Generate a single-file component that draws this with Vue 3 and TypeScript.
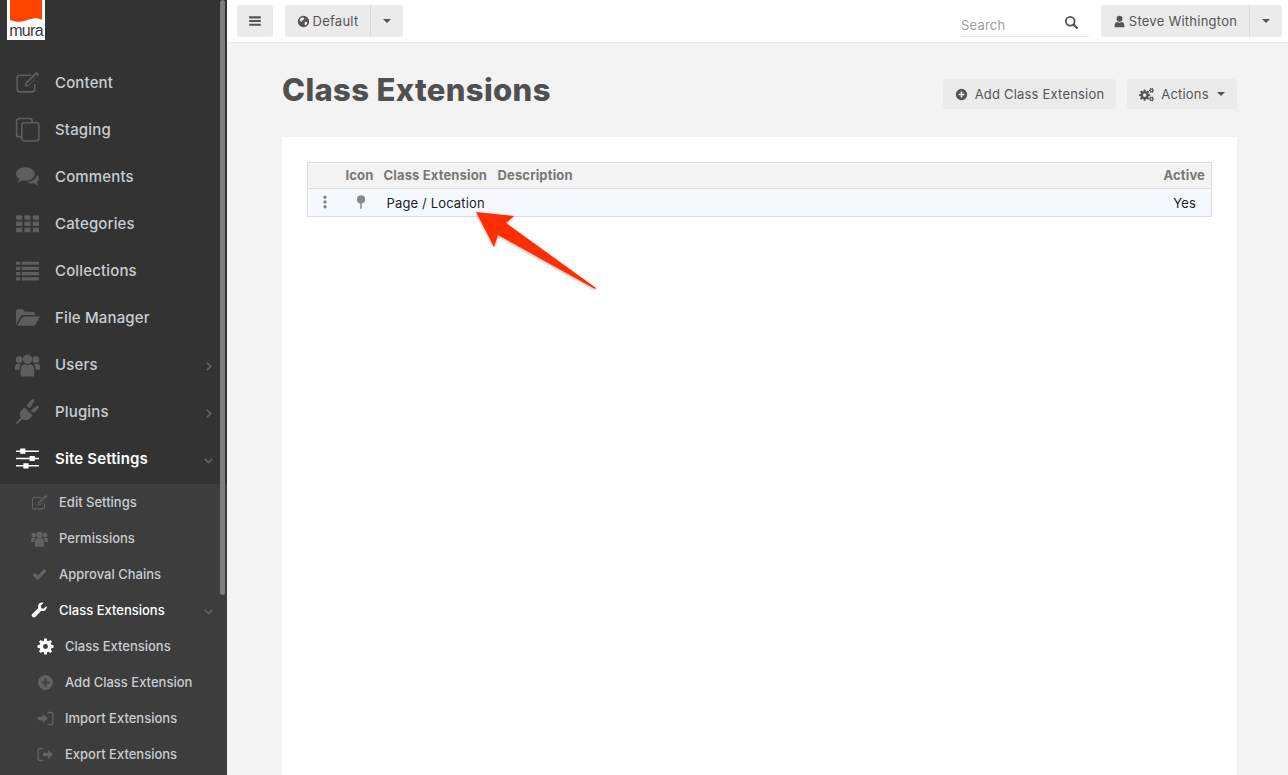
<script setup lang="ts">
type Shape = { d: string; line?: number }

// builds a cog outline with a round hole, used by the gear and actions icons
function gear(cx: number, cy: number, outer: number, inner: number, hole: number, teeth = 8) {
  const pts: string[] = []
  const step = (Math.PI * 2) / teeth
  for (let i = 0; i < teeth; i++) {
    const a = i * step
    const spots: [number, number][] = [
      [a - step * 0.36, inner],
      [a - step * 0.2, outer],
      [a + step * 0.2, outer],
      [a + step * 0.36, inner],
    ]
    for (const [t, r] of spots) {
      pts.push((cx + Math.cos(t) * r).toFixed(2) + ' ' + (cy + Math.sin(t) * r).toFixed(2))
    }
  }
  const ring = `M${cx - hole} ${cy}a${hole} ${hole} 0 1 0 ${hole * 2} 0a${hole} ${hole} 0 1 0 ${-hole * 2} 0z`
  return 'M' + pts.join('L') + 'z' + ring
}

const icons: Record<string, Shape[]> = {
  edit: [
    { d: 'M19 13.500V18a3 3 0 0 1-3 3H5a3 3 0 0 1-3-3V8a3 3 0 0 1 3-3h10', line: 1.5 },
    { d: 'M20.500 1.500l3 2.800L13.500 15l-4.200 1 1-4.200z M20.500 4.200l-8.700 8.500-.4 1.900 1.900-.5 8.600-8.400z' },
  ],
  copy: [
    { d: 'M6 19H4a2.500 2.500 0 0 1-2.500-2.500V4A2.500 2.500 0 0 1 4 1.500h10A2.500 2.500 0 0 1 16.500 4v1.500', line: 1.5 },
    { d: 'M9 5.500h11.500A2.500 2.500 0 0 1 23 8v12.500a2.500 2.500 0 0 1-2.500 2.500H9a2.500 2.500 0 0 1-2.500-2.500V8A2.500 2.500 0 0 1 9 5.500z', line: 1.5 },
  ],
  comments: [
    { d: 'M10 3c5 0 9 2.700 9 6.500S15 16 10 16c-1 0-2-.1-3-.4-1 1-3 1.700-5 2 1-1 2-2.300 2-3.500C2 13 1 11.500 1 9.500 1 5.700 5 3 10 3z' },
    { d: 'M21 10c1.500 1.200 2 2.500 2 4 0 1.500-1 2.800-2 3.500 0 1.200.6 2.300 1.500 3-2-.3-3.500-1-4.500-2-2.500.5-5 0-7-1.500 5 .3 10-3 10-7z' },
  ],
  grid: [
    {
      d: 'M1 4h6v4.500H1z M9 4h6v4.500H9z M17 4h6v4.500h-6z M1 10h6v4.500H1z M9 10h6v4.500H9z M17 10h6v4.500h-6z M1 16h6v4.500H1z M9 16h6v4.500H9z M17 16h6v4.500h-6z',
    },
  ],
  list: [
    {
      d: 'M1 3.500h4v3H1z M6.500 3.500H23v3H6.500z M1 8.500h4v3H1z M6.500 8.500H23v3H6.500z M1 13.500h4v3H1z M6.500 13.500H23v3H6.500z M1 18.500h4v3H1z M6.500 18.500H23v3H6.500z',
    },
  ],
  folder: [
    { d: 'M1 19V5.500A1.500 1.500 0 0 1 2.500 4h5l2 2.500h8A1.500 1.500 0 0 1 19 8v1.500H7.500a2 2 0 0 0-1.800 1L1 19z' },
    { d: 'M7.500 11H24l-4.700 8a2 2 0 0 1-1.800 1H2z' },
  ],
  users: [
    { d: 'M12 2.500a4.500 4.500 0 1 1 0 9 4.500 4.500 0 0 1 0-9z M5.500 23v-6.500c0-2.500 1.500-4.500 4-4.800 1.600.9 3.400.9 5 0 2.500.3 4 2.300 4 4.800V23a2 2 0 0 1-1.500 .5H7a2 2 0 0 1-1.500-.5z' },
    { d: 'M4 4a3.300 3.300 0 1 1 0 6.600A3.300 3.300 0 0 1 4 4z M20 4a3.300 3.300 0 1 1 0 6.600A3.300 3.300 0 0 1 20 4z' },
    { d: 'M0 17v-3c0-1.500 1-2.700 2.500-3 1 .5 2.500.6 4 .2-1.500 1.300-2.300 3-2.300 5.500v.3z M24 17v-3c0-1.500-1-2.700-2.500-3-1 .5-2.500.6-4 .2 1.500 1.300 2.300 3 2.300 5.500v.3z' },
  ],
  plug: [
    { d: 'M.5 23.500l5-5.500c-1.500-3-.7-5.500 1-7.500L9 8l8 8-2.500 2.500c-2 1.800-4.500 2.500-7.500 1L1.500 24.500z' },
    { d: 'M11 6.500L16 .5c1-.5 2.500 0 2.500 1.500L14.200 9z M15 11l6-4.500c1.500-.5 2.500.5 2 2L18 13.500z' },
  ],
  sliders: [
    { d: 'M1 5h22 M1 12h22 M1 19h22', line: 1.5 },
    { d: 'M5 2.500h5v5H5z M14 9.500h5v5h-5z M8 16.500h5v5H8z' },
  ],
  check: [{ d: 'M2 13l3.500-3.500 4 4 9-9.500L22 7.500 9.500 20z' }],
  wrench: [
    { d: 'M22 5.500l-4.200 4-3.300-.8-.8-3.300 4-4.200c-3-1-6 .2-7.200 2.800-.6 1.500-.6 3 0 4.300L2 16.500a3 3 0 0 0 4.300 4.300l8.200-8.500c1.400.6 3 .6 4.500 0 2.600-1.200 3.800-4 3-6.800z' },
  ],
  cog: [{ d: gear(12, 12, 11.500, 8.500, 3.500) }],
  plus: [{ d: 'M12 1.500a10.500 10.500 0 1 1 0 21 10.500 10.500 0 0 1 0-21z M10.500 6.500v4h-4v3h4v4h3v-4h4v-3h-4v-4z' }],
  signIn: [
    { d: 'M1 9.500h7V5.500l7.500 6.500L8 18.500v-4H1z' },
    { d: 'M15 3.500h4.500a3 3 0 0 1 3 3v11a3 3 0 0 1-3 3H15', line: 2 },
  ],
  signOut: [
    { d: 'M9 3.500H4.500a3 3 0 0 0-3 3v11a3 3 0 0 0 3 3H9', line: 2 },
    { d: 'M8.500 9.500h7V5.500L23 12l-7.500 6.500v-4h-7z' },
  ],
  globe: [
    { d: 'M12 1.500a10.500 10.500 0 1 1 0 21 10.500 10.500 0 0 1 0-21z M7 5.500l4-1.500 2.500 2-2 3.500-3 1 .5 2.500-2-.5-2-3z M14.500 12.500l4 .5.500 2.500-3.500 4-1.500-2z' },
  ],
  user: [{ d: 'M12 1.500a5.500 5.500 0 1 1 0 11 5.500 5.500 0 0 1 0-11z M3 22.500V19c0-3.500 2.500-6 5-6 1 1 2.500 1.500 4 1.500s3-.5 4-1.500c2.500 0 5 2.500 5 6v3.500z' }],
  search: [
    { d: 'M10 3a7 7 0 1 1 0 14 7 7 0 0 1 0-14z', line: 3 },
    { d: 'M15 15l6.500 6.500', line: 3.500 },
  ],
  gears: [
    { d: gear(9, 13, 9, 6.500, 2.800) },
    { d: gear(20, 5.500, 4.200, 3, 1.300, 6) },
    { d: gear(20, 19, 4.200, 3, 1.300, 6) },
  ],
  pin: [{ d: 'M12 .5a7 7 0 1 1 0 14 7 7 0 0 1 0-14z M10.700 14h2.600v9.500h-2.600z' }],
  dots: [{ d: 'M12 1a3 3 0 1 1 0 6 3 3 0 0 1 0-6z M12 9a3 3 0 1 1 0 6 3 3 0 0 1 0-6z M12 17a3 3 0 1 1 0 6 3 3 0 0 1 0-6z' }],
}

const mainNav = [
  { label: 'Content', icon: 'edit' },
  { label: 'Staging', icon: 'copy' },
  { label: 'Comments', icon: 'comments' },
  { label: 'Categories', icon: 'grid' },
  { label: 'Collections', icon: 'list' },
  { label: 'File Manager', icon: 'folder' },
  { label: 'Users', icon: 'users', more: 'right' },
  { label: 'Plugins', icon: 'plug', more: 'right' },
  { label: 'Site Settings', icon: 'sliders', more: 'down', active: true },
]

const subNav = [
  { label: 'Edit Settings', icon: 'edit', level: 1 },
  { label: 'Permissions', icon: 'users', level: 1 },
  { label: 'Approval Chains', icon: 'check', level: 1 },
  { label: 'Class Extensions', icon: 'wrench', level: 1, more: 'down', active: true },
  { label: 'Class Extensions', icon: 'cog', level: 2, iconActive: true },
  { label: 'Add Class Extension', icon: 'plus', level: 2 },
  { label: 'Import Extensions', icon: 'signIn', level: 2 },
  { label: 'Export Extensions', icon: 'signOut', level: 2 },
]

const chevrons: Record<string, string> = {
  right: 'M9 5l7 7-7 7',
  down: 'M5 9l7 7 7-7',
}
</script>

<template>
  <div class="app">
    <aside class="sidebar">
      <div class="logo">
        <svg class="logo-flag" viewBox="0 0 32 22">
          <path d="M0 0h32v20c-5-3-10-1.500-16 .5S5 22 0 20z" />
        </svg>
        <span class="logo-text">mura</span>
      </div>

      <nav class="nav-main">
        <a
          v-for="item in mainNav"
          :key="item.label"
          class="nav-item"
          :class="{ active: item.active }"
        >
          <svg class="nav-icon" viewBox="0 0 24 24">
            <path
              v-for="(p, i) in icons[item.icon]"
              :key="i"
              :d="p.d"
              :fill="p.line ? 'none' : 'currentColor'"
              :stroke="p.line ? 'currentColor' : 'none'"
              :stroke-width="p.line"
              fill-rule="evenodd"
            />
          </svg>
          <span class="nav-label">{{ item.label }}</span>
          <svg v-if="item.more" class="chevron" viewBox="0 0 24 24">
            <path :d="chevrons[item.more]" fill="none" stroke="currentColor" stroke-width="3" />
          </svg>
        </a>
      </nav>

      <nav class="nav-sub">
        <a
          v-for="(item, n) in subNav"
          :key="n"
          class="sub-item"
          :class="['level-' + item.level, { active: item.active }]"
        >
          <svg class="sub-icon" :class="{ lit: item.iconActive }" viewBox="0 0 24 24">
            <path
              v-for="(p, i) in icons[item.icon]"
              :key="i"
              :d="p.d"
              :fill="p.line ? 'none' : 'currentColor'"
              :stroke="p.line ? 'currentColor' : 'none'"
              :stroke-width="p.line"
              fill-rule="evenodd"
            />
          </svg>
          <span class="sub-label">{{ item.label }}</span>
          <svg v-if="item.more" class="chevron" viewBox="0 0 24 24">
            <path :d="chevrons[item.more]" fill="none" stroke="currentColor" stroke-width="3" />
          </svg>
        </a>
      </nav>

      <div class="scroll-thumb"></div>
    </aside>

    <div class="page">
      <header class="topbar">
        <button class="btn toggle">
          <svg class="btn-icon" viewBox="0 0 24 24"><path d="M2 4h20v3.500H2z M2 10.200h20v3.500H2z M2 16.500h20V20H2z" fill="currentColor" /></svg>
        </button>
        <div class="btn-group site">
          <button class="btn main-part">
            <svg class="btn-icon small" viewBox="0 0 24 24"><path :d="icons.globe[0].d" fill="currentColor" fill-rule="evenodd" /></svg>
            Default
          </button>
          <button class="btn caret-part"><i class="caret"></i></button>
        </div>

        <div class="search">
          <span class="search-text">Search</span>
          <svg class="search-icon" viewBox="0 0 24 24">
            <path v-for="(p, i) in icons.search" :key="i" :d="p.d" fill="none" stroke="currentColor" :stroke-width="p.line" />
          </svg>
        </div>

        <div class="btn-group account">
          <button class="btn main-part">
            <svg class="btn-icon small" viewBox="0 0 24 24"><path :d="icons.user[0].d" fill="currentColor" fill-rule="evenodd" /></svg>
            Steve Withington
          </button>
          <button class="btn caret-part"><i class="caret"></i></button>
        </div>
      </header>

      <main class="content">
        <div class="title-row">
          <h1>Class Extensions</h1>
          <div class="actions">
            <button class="btn action add">
              <svg class="btn-icon small" viewBox="0 0 24 24"><path :d="icons.plus[0].d" fill="currentColor" fill-rule="evenodd" /></svg>
              Add Class Extension
            </button>
            <button class="btn action menu">
              <svg class="btn-icon gears" viewBox="0 0 24 24">
                <path v-for="(p, i) in icons.gears" :key="i" :d="p.d" fill="currentColor" fill-rule="evenodd" />
              </svg>
              Actions
              <i class="caret"></i>
            </button>
          </div>
        </div>

        <section class="card">
          <table class="ext-table">
            <thead>
              <tr>
                <th class="col-drag"></th>
                <th class="col-icon">Icon</th>
                <th class="col-name">Class Extension</th>
                <th>Description</th>
                <th class="col-active">Active</th>
              </tr>
            </thead>
            <tbody>
              <tr>
                <td class="col-drag">
                  <svg class="row-icon" viewBox="0 0 24 24"><path :d="icons.dots[0].d" fill="currentColor" /></svg>
                </td>
                <td class="col-icon">
                  <svg class="row-icon pin" viewBox="0 0 24 24"><path :d="icons.pin[0].d" fill="currentColor" /></svg>
                </td>
                <td class="col-name name-cell">Page / Location</td>
                <td></td>
                <td class="col-active">Yes</td>
              </tr>
            </tbody>
          </table>
        </section>
      </main>
    </div>

    <svg class="callout" viewBox="0 0 140 90" width="140" height="90">
      <defs>
        <filter id="arrow-shadow" x="-10%" y="-10%" width="120%" height="130%">
          <feDropShadow dx="0" dy="1" stdDeviation="1.500" flood-color="#000" flood-opacity="0.35" />
        </filter>
      </defs>
      <path
        d="M5 5 L43 9 L35 16 L125 81 L124 82 L27 28 L23 40 Z"
        fill="#ff2d00"
        filter="url(#arrow-shadow)"
      />
    </svg>
  </div>
</template>

<style>
html,
body {
  margin: 0;
  height: 100%;
  overflow: hidden;
}
</style>

<style scoped>
.app {
  display: flex;
  height: 775px;
  position: relative;
  overflow: hidden;
  font-family: Inter, "Open Sans", sans-serif;
  color: #555;
}

.sidebar {
  width: 227px;
  flex-shrink: 0;
  background: #333;
  position: relative;
  overflow: hidden;
}

.logo {
  width: 38px;
  height: 40px;
  margin-left: 7px;
  background: #fff;
  display: flex;
  flex-direction: column;
  align-items: center;
}

.logo-flag {
  width: 32px;
  height: 22px;
  flex-shrink: 0;
  fill: #ff4400;
}

.logo-text {
  font-family: "Liberation Sans", sans-serif;
  font-size: 16px;
  line-height: 15px;
  letter-spacing: -0.7px;
  color: #3a3a3a;
  margin-top: 1px;
}

.nav-main {
  padding-top: 19px;
}

.nav-item {
  height: 47px;
  display: flex;
  align-items: center;
  padding-left: 15px;
  position: relative;
  color: #c9cdd2;
}

.nav-icon {
  width: 25px;
  height: 25px;
  margin-right: 15px;
  color: #5e5e5e;
  flex-shrink: 0;
}

.nav-label {
  font-size: 15px;
  font-weight: 500;
  letter-spacing: 0.15px;
}

.nav-item.active {
  color: #fff;
}

.nav-item.active .nav-label {
  font-weight: 600;
}

.nav-item.active .nav-icon {
  color: #fff;
}

.chevron {
  position: absolute;
  right: 12px;
  top: 50%;
  width: 13px;
  height: 13px;
  margin-top: -5px;
  color: #626262;
}

.nav-sub {
  margin-top: 2px;
  background: #3d3d3d;
  height: 300px;
}

.sub-item {
  height: 36px;
  display: flex;
  align-items: center;
  position: relative;
  color: #c9cdd2;
}

.level-1 {
  padding-left: 31px;
}

.level-2 {
  padding-left: 37px;
}

.sub-icon {
  width: 17px;
  height: 17px;
  margin-right: 11px;
  flex-shrink: 0;
  color: #626262;
}

.sub-icon.lit {
  color: #fff;
}

.sub-label {
  font-size: 13px;
  font-weight: 500;
  letter-spacing: 0;
}

.sub-item.active {
  color: #fff;
}

.sub-item.active .sub-icon {
  color: #fff;
}

.scroll-thumb {
  position: absolute;
  top: 0;
  left: 220px;
  width: 5px;
  height: 595px;
  background: #7d7d7d;
  border-radius: 3px;
}

.page {
  flex: 1;
  min-width: 0;
  background: #f3f3f3;
  display: flex;
  flex-direction: column;
}

.topbar {
  height: 43px;
  box-sizing: border-box;
  background: #fff;
  border-bottom: 1px solid #ebebeb;
  display: flex;
  align-items: flex-start;
  padding: 5px 6px 0 10px;
}

.btn {
  border: 0;
  background: #ebebeb;
  color: #555;
  font-family: inherit;
  font-size: 13px;
  border-radius: 3px;
  padding: 0;
  display: inline-flex;
  align-items: center;
  justify-content: center;
  white-space: nowrap;
}

.toggle {
  width: 36px;
  height: 32px;
  margin-right: 12px;
}

.btn-icon {
  width: 14px;
  height: 14px;
  color: #555;
}

.btn-icon.small {
  width: 13px;
  height: 13px;
  margin-right: 3px;
}

.btn-icon.gears {
  width: 15px;
  height: 15px;
  margin-right: 7px;
}

.btn-group {
  display: flex;
  height: 32px;
}

.main-part {
  height: 32px;
  border-radius: 3px 0 0 3px;
  border-right: 1px solid #d8d8d8;
  letter-spacing: 0.25px;
}

.caret-part {
  height: 32px;
  border-radius: 0 3px 3px 0;
}

.site .main-part {
  width: 86px;
}

.site .caret-part {
  width: 32px;
}

.account .main-part {
  width: 149px;
}

.account .caret-part {
  width: 32px;
}

.caret {
  display: inline-block;
  width: 0;
  height: 0;
  border-left: 4px solid transparent;
  border-right: 4px solid transparent;
  border-top: 4px solid #555;
}

.search {
  margin-left: auto;
  width: 128px;
  height: 32px;
  box-sizing: border-box;
  border-bottom: 1px solid #e2e2e2;
  margin-right: 12px;
  display: flex;
  align-items: center;
  justify-content: space-between;
  padding-right: 10px;
}

.search-text {
  font-size: 13px;
  color: #a0a0a0;
  margin-top: 8px;
  letter-spacing: 0.2px;
}

.search-icon {
  width: 15px;
  height: 15px;
  color: #555;
  margin-top: 3px;
}

.content {
  flex: 1;
  min-height: 0;
  padding: 0 51px 0 55px;
  display: flex;
  flex-direction: column;
}

.title-row {
  height: 94px;
  display: flex;
  justify-content: space-between;
  align-items: flex-start;
}

h1 {
  margin: 27px 0 0;
  font-size: 31px;
  line-height: 40px;
  font-weight: 800;
  color: #505050;
  letter-spacing: 0.35px;
}

.actions {
  display: flex;
  gap: 11px;
  margin-top: 36px;
}

.action {
  height: 30px;
  letter-spacing: 0.2px;
}

.action.add {
  width: 173px;
}

.action.add .btn-icon.small {
  margin-right: 7px;
}

.action.menu {
  width: 110px;
}

.action.menu .caret {
  margin-left: 8px;
}

.card {
  flex: 1;
  background: #fff;
  padding: 25px;
}

.ext-table {
  width: 100%;
  border-collapse: collapse;
  table-layout: fixed;
  border: 1px solid #ddd;
  font-size: 13px;
}

th {
  height: 26px;
  padding: 0 0 1px;
  background: #f3f3f3;
  border-bottom: 1px solid #ddd;
  color: #777;
  font-weight: 700;
  letter-spacing: 0.15px;
  text-align: left;
  box-sizing: border-box;
}

td {
  height: 28px;
  padding: 0;
  background: #f5f9fe;
  color: #222;
  letter-spacing: 0.15px;
  box-sizing: border-box;
}

.col-drag {
  width: 38px;
  text-align: center;
  color: #888;
}

.col-icon {
  width: 38px;
}

.col-name {
  width: 114px;
}

.name-cell {
  padding-left: 3px;
}

.col-active {
  width: 70px;
  text-align: right;
  padding-right: 6px;
}

td.col-active {
  padding-right: 15px;
}

.row-icon {
  width: 14px;
  height: 14px;
  color: #888;
  display: block;
  margin-left: 10px;
  margin-top: -2px;
}

.row-icon.pin {
  margin-left: 8px;
}

.callout {
  position: absolute;
  left: 471px;
  top: 207px;
  pointer-events: none;
}
</style>
